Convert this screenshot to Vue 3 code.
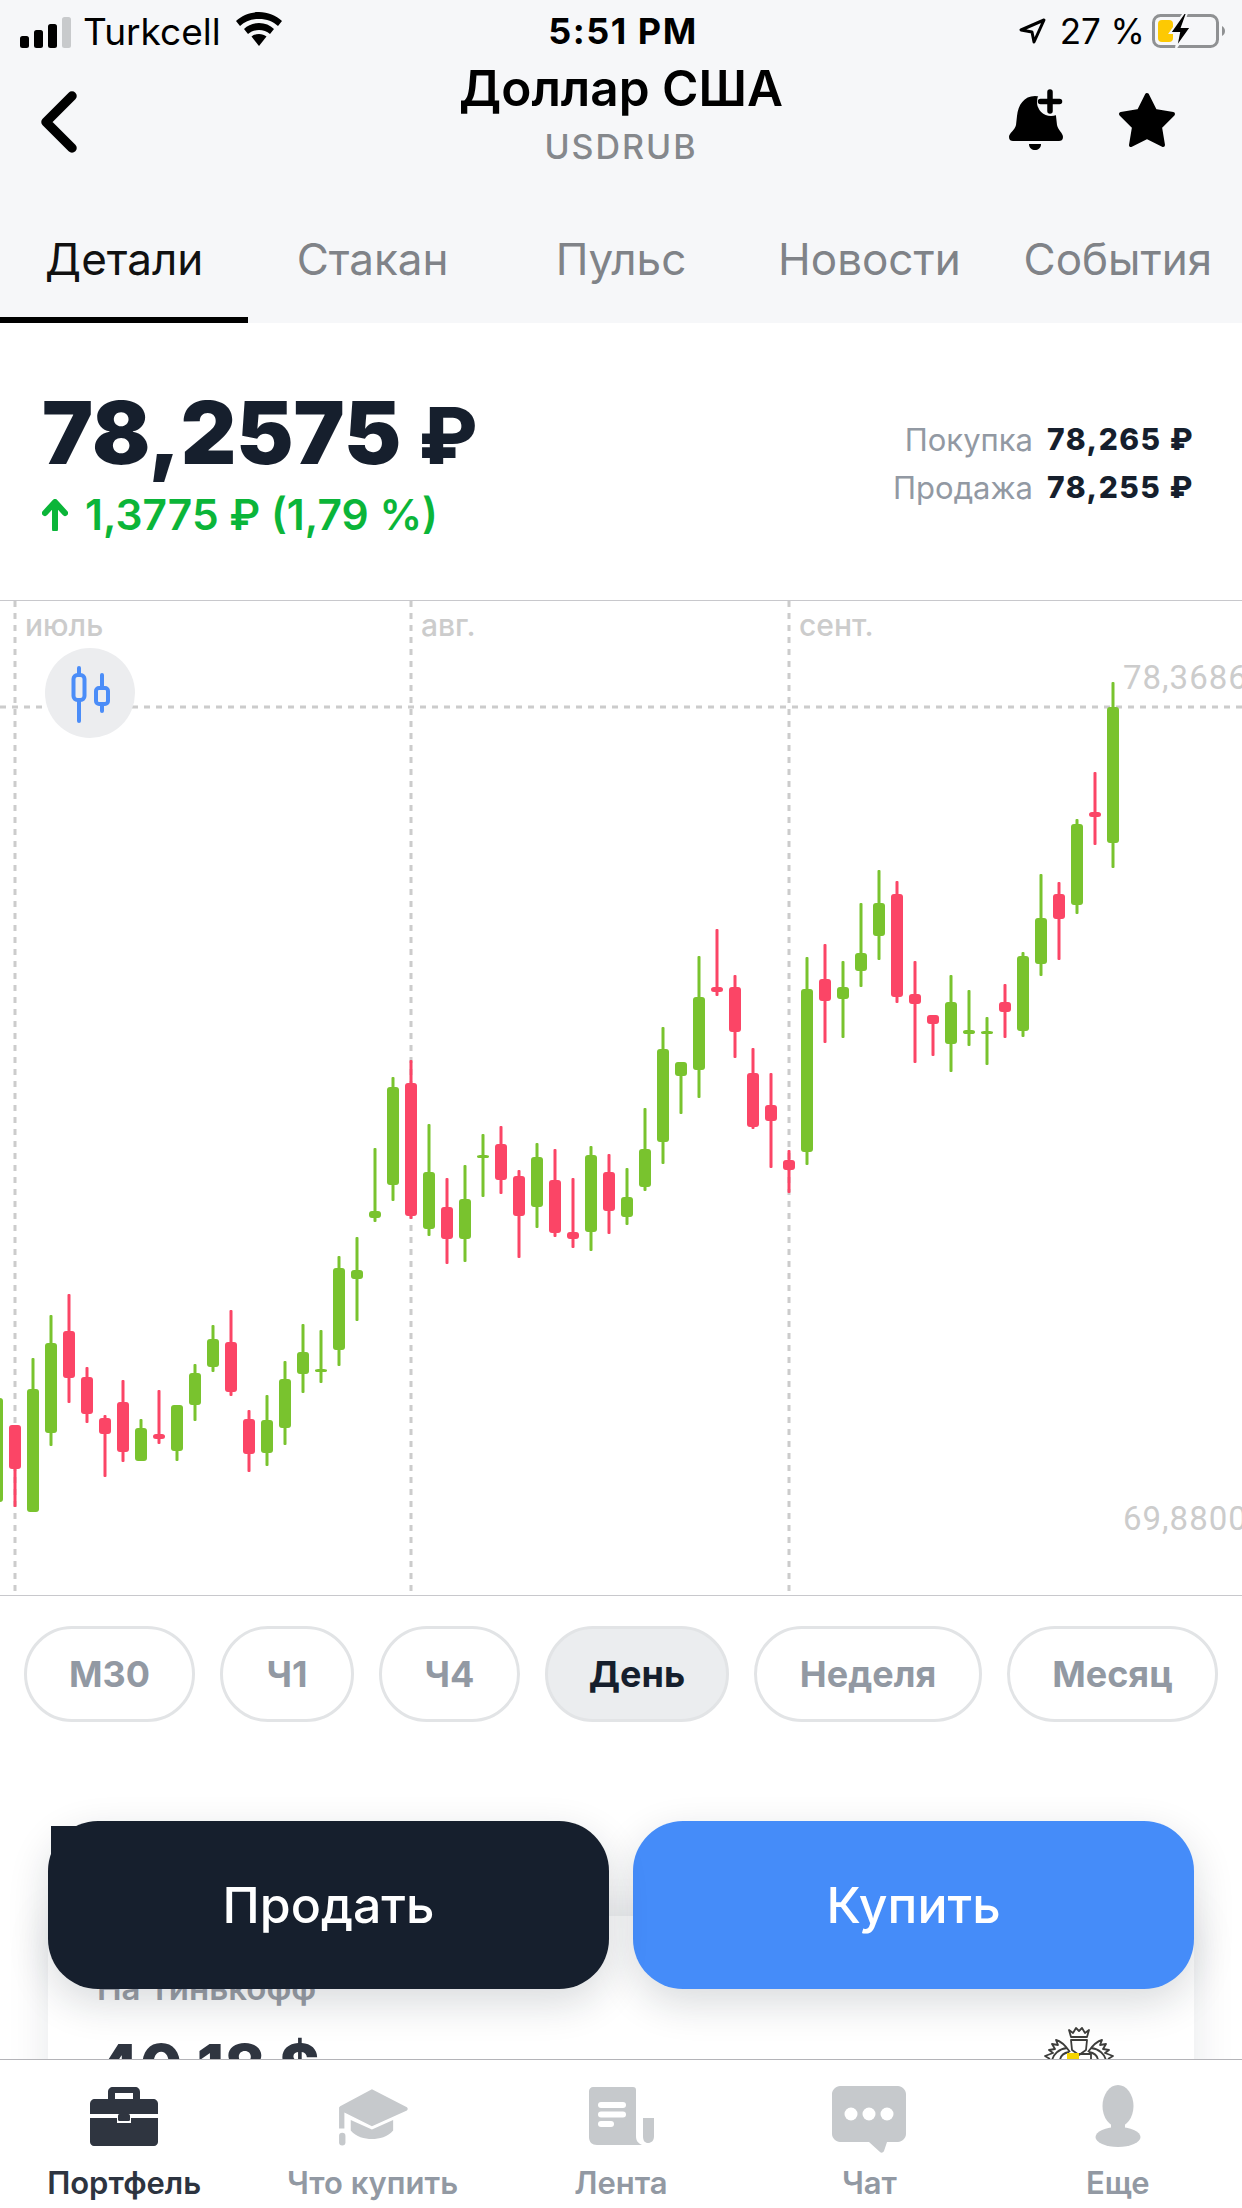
<script setup>
// [color, wick top, body top, body bottom, wick bottom] in page pixels, one candle every 18px
const raw = [
  ['g', 1398, 1398, 1502, 1502], ['r', 1425, 1425, 1469, 1507], ['g', 1358, 1389, 1512, 1512],
  ['g', 1315, 1343, 1433, 1446], ['r', 1294, 1331, 1378, 1403], ['r', 1367, 1377, 1414, 1423],
  ['r', 1415, 1418, 1434, 1477], ['r', 1380, 1402, 1452, 1462], ['g', 1419, 1428, 1461, 1461],
  ['r', 1390, 1434, 1439, 1444], ['g', 1405, 1405, 1451, 1461], ['g', 1364, 1373, 1405, 1421],
  ['g', 1325, 1339, 1367, 1372], ['r', 1310, 1342, 1392, 1396], ['r', 1410, 1419, 1454, 1472],
  ['g', 1395, 1420, 1453, 1466], ['g', 1361, 1379, 1428, 1445], ['g', 1324, 1352, 1374, 1393],
  ['g', 1330, 1369, 1372, 1383], ['g', 1256, 1268, 1350, 1366], ['g', 1237, 1270, 1279, 1321],
  ['g', 1148, 1211, 1218, 1222], ['g', 1077, 1087, 1185, 1201], ['r', 1060, 1083, 1216, 1219],
  ['g', 1124, 1172, 1229, 1236], ['r', 1178, 1207, 1239, 1264], ['g', 1165, 1199, 1239, 1262],
  ['g', 1134, 1155, 1158, 1197], ['r', 1126, 1144, 1180, 1194], ['r', 1170, 1176, 1216, 1258],
  ['g', 1143, 1157, 1207, 1228], ['r', 1149, 1180, 1233, 1237], ['r', 1178, 1232, 1239, 1248],
  ['g', 1146, 1155, 1232, 1251], ['r', 1154, 1172, 1211, 1234], ['g', 1168, 1197, 1217, 1225],
  ['g', 1108, 1149, 1187, 1191], ['g', 1027, 1049, 1142, 1164], ['g', 1062, 1062, 1076, 1114],
  ['g', 956, 997, 1070, 1098], ['r', 929, 987, 992, 996], ['r', 975, 987, 1032, 1058],
  ['r', 1048, 1073, 1127, 1129], ['r', 1073, 1105, 1121, 1168], ['r', 1150, 1160, 1170, 1193],
  ['g', 957, 989, 1152, 1165], ['r', 944, 979, 1001, 1043], ['g', 961, 987, 999, 1038],
  ['g', 903, 953, 971, 987], ['g', 870, 903, 936, 960], ['r', 881, 894, 997, 1003],
  ['r', 961, 994, 1004, 1063], ['r', 1015, 1015, 1024, 1056], ['g', 975, 1002, 1044, 1072],
  ['g', 990, 1030, 1034, 1046], ['g', 1017, 1031, 1034, 1065], ['r', 984, 1002, 1012, 1038],
  ['g', 952, 956, 1031, 1037], ['g', 874, 918, 964, 976], ['r', 882, 894, 919, 960],
  ['g', 819, 824, 905, 914], ['r', 772, 812, 817, 845], ['g', 682, 707, 843, 868],
];

const candles = raw.map((c, i) => ({
  x: -3 + 18 * i,
  color: c[0] === 'g' ? '#79c32e' : '#fb4566',
  wickTop: c[1],
  bodyTop: c[2],
  bodyH: c[3] - c[2],
  wickH: c[4] - c[1],
}));

const months = [
  { x: 15, label: 'июль' },
  { x: 411, label: 'авг.' },
  { x: 789, label: 'сент.' },
];

const tabs = ['Детали', 'Стакан', 'Пульс', 'Новости', 'События'];

const periods = [
  { label: 'М30', w: 171 },
  { label: 'Ч1', w: 134 },
  { label: 'Ч4', w: 141 },
  { label: 'День', w: 184, active: true },
  { label: 'Неделя', w: 228 },
  { label: 'Месяц', w: 211 },
];
</script>

<template>
  <div class="screen">
    <header class="top">
      <div class="status">
        <div class="status-left">
          <div class="signal">
            <i class="b1"></i><i class="b2"></i><i class="b3"></i><i class="b4"></i>
          </div>
          <span class="carrier">Turkcell</span>
          <svg class="wifi" width="46" height="34" viewBox="0 0 46 34">
            <path d="M23 0C14 0 6 3.500 0 9l4 5c5-4.500 11-7 19-7s14 2.500 19 7l4-5C40 3.500 32 0 23 0z" />
            <path d="M23 11c-6 0-11 2-15 6l4 5c3-2.500 7-4 11-4s8 1.500 11 4l4-5c-4-4-9-6-15-6z" />
            <path d="M23 22c-3 0-5.500 1-7.500 2.500L23 34l7.500-9.500C28.500 23 26 22 23 22z" />
          </svg>
        </div>
        <span class="time">5:51 PM</span>
        <div class="status-right">
          <svg class="loc" width="27" height="26" viewBox="0 0 27 26">
            <path d="M25 2L2 12l11 2 2 10z" fill="none" stroke="#000" stroke-width="3" stroke-linejoin="round" />
          </svg>
          <span class="percent">27 %</span>
          <svg class="battery" width="74" height="34" viewBox="0 0 74 34">
            <rect x="1.500" y="1.500" width="64" height="31" rx="7" fill="none" stroke="#8f9193" stroke-width="3" />
            <rect x="6" y="6" width="15" height="22" rx="4" fill="#fdc903" />
            <path d="M70 12c2 1 3 3 3 5s-1 4-3 5z" fill="#8f9193" />
            <path d="M32 -1l-14 20h9l-3 15 15-21h-9l5-14z" fill="#000" stroke="#f6f7f9" stroke-width="2" />
          </svg>
        </div>
      </div>

      <div class="nav">
        <svg class="back" width="40" height="64" viewBox="0 0 40 64">
          <path d="M32 6L6 32l26 26" fill="none" stroke="#000" stroke-width="9.500" stroke-linecap="round" stroke-linejoin="round" />
        </svg>
        <div class="heading">
          <div class="title">Доллар США</div>
          <div class="ticker">USDRUB</div>
        </div>
        <div class="actions">
          <svg width="64" height="64" viewBox="1005 90 64 64">
            <path d="M1035 98c-11 0-17 9-18 20l-1 9c-1 5-7 8-7 12 0 3 2 4 4 4h46c2 0 4-1 4-4 0-4-5-7-6-12l-1-9c-1-11-9-20-21-20z" fill="#000" />
            <circle cx="1051" cy="104" r="14" fill="#f6f7f9" />
            <path d="M1050 94v19M1040.500 103.500h19" stroke="#000" stroke-width="5.500" stroke-linecap="round" />
            <path d="M1029 146h12c0 4-3 6-6 6s-6-2-6-6z" fill="#000" />
          </svg>
          <svg width="58" height="56" viewBox="0 0 58 56">
            <path d="M29 3l8 16 18 3-13 13 3 18-16-8-16 8 3-18L3 22l18-3z" fill="#000" stroke="#000" stroke-width="4" stroke-linejoin="round" />
          </svg>
        </div>
      </div>

      <nav class="tabs">
        <div v-for="(t, i) in tabs" :key="t" class="tab" :class="{ active: i === 0 }">{{ t }}</div>
      </nav>
    </header>

    <section class="price">
      <div>
        <div class="price-main">78,2575 <span class="rub">₽</span></div>
        <div class="change">
          <svg width="26" height="32" viewBox="0 0 26 32">
            <path d="M13 30V4M3 14L13 3l10 11" fill="none" stroke="#0bb539" stroke-width="6" stroke-linecap="round" stroke-linejoin="round" />
          </svg>
          <span>1,3775 ₽ (1,79 %)</span>
        </div>
      </div>
      <div class="quotes">
        <span class="q-label">Покупка</span><span class="q-value">78,265 ₽</span>
        <span class="q-label">Продажа</span><span class="q-value">78,255 ₽</span>
      </div>
    </section>

    <div class="chart">
      <svg width="1242" height="994" viewBox="0 601 1242 994">
        <line x1="0" y1="707" x2="1242" y2="707" class="grid" />
        <g v-for="m in months" :key="m.label">
          <line :x1="m.x" y1="601" :x2="m.x" y2="1595" class="grid" />
          <text :x="m.x + 10" y="636" class="month">{{ m.label }}</text>
        </g>
        <text x="1123" y="689" class="axis">78,3686</text>
        <text x="1123" y="1530" class="axis">69,8800</text>

        <circle cx="90" cy="693" r="45" fill="#ecedef" />
        <g fill="none" stroke="#4b8df8" stroke-width="4" stroke-linecap="round">
          <path d="M79 668v7M79 700v21M102 675v13M102 704v7" />
          <rect x="73.500" y="675" width="11" height="25" rx="4" />
          <rect x="96" y="688" width="12" height="16" rx="3" />
        </g>

        <g v-for="c in candles" :key="c.x">
          <rect :x="c.x - 1.500" :y="c.wickTop" width="3" :height="c.wickH" :fill="c.color" rx="1" />
          <rect :x="c.x - 6" :y="c.bodyTop" width="12" :height="c.bodyH" :fill="c.color" rx="3" />
        </g>
      </svg>
    </div>

    <div class="periods">
      <div
        v-for="p in periods"
        :key="p.label"
        class="pill"
        :class="{ active: p.active }"
        :style="{ width: p.w + 'px' }"
      >{{ p.label }}</div>
    </div>

    <div class="lower">
      <div class="card">
        <div>
          <div class="card-label">На Тинькофф</div>
          <div class="card-value">40,18 $</div>
        </div>
        <svg class="crest" width="72" height="34" viewBox="0 0 72 34">
          <g fill="none" stroke="#3d3d3b" stroke-width="1.800" stroke-linejoin="round">
            <path d="M28 10l-2-7 4 3 3-5 3 3 3-3 3 5 4-3-2 7z" />
            <path d="M28 13h16l-1 10-7 5-7-5z" />
            <path d="M27 25c-5-7-9-11-14-12l2 5-6-1 3 5-6 1 4 3-8 3 5 3" />
            <path d="M45 25c5-7 9-11 14-12l-2 5 6-1-3 5 6 1-4 3 8 3-5 3" />
            <path d="M9 34c1-7 7-12 15-13M17 34c0-5 4-8 9-9M63 34c-1-7-7-12-15-13M55 34c0-5-4-8-9-9" />
            <path d="M36 27h12v7" />
          </g>
          <rect x="24" y="26" width="12" height="8" fill="#f5d400" />
        </svg>
      </div>
      <div class="deal">
        <button class="btn sell">Продать</button>
        <button class="btn buy">Купить</button>
      </div>
    </div>

    <footer class="bar">
      <div class="bar-item active">
        <svg width="70" height="62" viewBox="0 0 70 62">
          <path d="M19 14V7c0-3 2-5 5-5h22c3 0 5 2 5 5v7h-7V8H26v6z" fill="#2f3540" />
          <path d="M1 19c0-3 2-5 5-5h58c3 0 5 2 5 5v10H1z" fill="#2f3540" />
          <path d="M1 33h27v5h14v-5h27v24c0 2-2 4-4 4H5c-2 0-4-2-4-4z" fill="#2f3540" />
          <rect x="29" y="29" width="12" height="7" rx="1.500" fill="#2f3540" />
        </svg>
        <span>Портфель</span>
      </div>
      <div class="bar-item">
        <svg width="70" height="62" viewBox="2 -2 66 58.500">
          <path d="M34 2l33 17c1 1 1 2 0 3L34 37 8 24v15H3V20c0-1 0-1 1-2z" fill="#c6c9cc" />
          <path d="M14 31l20 9 20-9v10c-5 6-13 8-20 8s-15-2-20-8z" fill="#c6c9cc" />
          <rect x="3" y="43" width="6" height="12" rx="3" fill="#c6c9cc" />
        </svg>
        <span>Что купить</span>
      </div>
      <div class="bar-item">
        <svg width="70" height="62" viewBox="2 0 70 62">
          <path d="M9 2h40c2 0 3 1 3 3v46c0 5 2 7 6 9H13c-5 0-8-3-8-8V6c0-2 2-4 4-4z" fill="#c6c9cc" />
          <path d="M59 33h11v18c0 5-3 7-6 7s-5-2-5-7z" fill="#c6c9cc" />
          <rect x="14" y="17" width="28" height="6" rx="3" fill="#fff" />
          <rect x="14" y="26.500" width="28" height="6" rx="3" fill="#fff" />
          <rect x="14" y="36" width="16" height="6" rx="3" fill="#fff" />
        </svg>
        <span>Лента</span>
      </div>
      <div class="bar-item">
        <svg width="76" height="68" viewBox="0 0 76 68">
          <path d="M9 1h58c4 0 8 4 8 8v40c0 4-4 8-8 8H56l-3 9c-1 2-3 2-4 1L38 57H9c-4 0-8-4-8-8V9c0-4 4-8 8-8z" fill="#c6c9cc" />
          <circle cx="20" cy="29" r="6.500" fill="#fff" />
          <circle cx="38" cy="29" r="6.500" fill="#fff" />
          <circle cx="56" cy="29" r="6.500" fill="#fff" />
        </svg>
        <span>Чат</span>
      </div>
      <div class="bar-item">
        <svg width="70" height="62" viewBox="0 0 70 62">
          <ellipse cx="35" cy="21" rx="15.500" ry="21" fill="#c6c9cc" />
          <rect x="28" y="30" width="14" height="16" fill="#c6c9cc" />
          <ellipse cx="35" cy="52" rx="22.500" ry="10" fill="#c6c9cc" />
        </svg>
        <span>Еще</span>
      </div>
    </footer>
  </div>
</template>

<style scoped>
.screen {
  width: 1242px;
  height: 2208px;
  display: flex;
  flex-direction: column;
  overflow: hidden;
  background: #fff;
  font-family: Inter, "Liberation Sans", sans-serif;
  color: #161f2d;
}

.top {
  height: 323px;
  flex-shrink: 0;
  background: #f6f7f9;
  display: flex;
  flex-direction: column;
}

.status {
  height: 60px;
  box-sizing: border-box;
  padding: 2px 16px 0 20px;
  display: grid;
  grid-template-columns: 1fr auto 1fr;
  align-items: center;
  color: #000;
}

.status-left,
.status-right {
  display: flex;
  align-items: center;
}

.status-right {
  justify-content: flex-end;
}

.signal {
  display: flex;
  align-items: flex-end;
  gap: 5px;
  height: 31px;
  margin-top: 2px;
}

.signal i {
  width: 9px;
  border-radius: 2.500px;
  background: #000;
}

.signal .b1 { height: 12px; }
.signal .b2 { height: 18px; }
.signal .b3 { height: 24px; }
.signal .b4 { height: 31px; background: #c8cacc; }

.carrier {
  font-size: 37px;
  margin-left: 12px;
}

.wifi {
  margin-left: 15px;
  margin-top: -4px;
}

.time {
  font-weight: 700;
  font-size: 36px;
  letter-spacing: 1.500px;
}

.percent {
  font-size: 35px;
  margin-left: 14px;
}

.battery {
  margin-left: 7px;
}

.nav {
  height: 112px;
  display: grid;
  grid-template-columns: 1fr auto 1fr;
  padding: 0 66px;
  align-items: center;
}

.back {
  margin-top: 12px;
  margin-left: -26px;
}

.heading {
  text-align: center;
  margin-top: -6px;
}

.title {
  font-size: 49.500px;
  font-weight: 600;
  line-height: 58px;
  color: #000;
}

.ticker {
  font-size: 34px;
  font-weight: 500;
  line-height: 40px;
  letter-spacing: 2px;
  margin-top: 10px;
  color: #85888c;
}

.actions {
  display: flex;
  justify-content: flex-end;
  align-items: center;
  gap: 49px;
  margin-top: 8px;
}

.tabs {
  display: grid;
  grid-template-columns: repeat(5, 1fr);
  flex: 1;
}

.tab {
  font-size: 44px;
  color: #808388;
  display: flex;
  align-items: center;
  justify-content: center;
  padding-top: 30px;
  padding-bottom: 2px;
  border-bottom: 6px solid transparent;
}

.tab.active {
  color: #111;
  border-bottom-color: #000;
}

.price {
  height: 278px;
  flex-shrink: 0;
  box-sizing: border-box;
  padding: 60px 48px 0 42px;
  display: flex;
  justify-content: space-between;
  border-bottom: 1px solid #c8c8cc;
}

.price-main {
  font-size: 86px;
  font-weight: 900;
  line-height: 100px;
  white-space: nowrap;
}

.rub {
  font-size: 78px;
  font-weight: 800;
}

.change {
  display: flex;
  align-items: center;
  gap: 17px;
  margin-top: 4px;
  font-size: 42.500px;
  font-weight: 600;
  line-height: 50px;
  color: #0bb539;
}

.quotes {
  display: grid;
  grid-template-columns: auto auto;
  column-gap: 14px;
  row-gap: 13px;
  align-self: flex-start;
  margin-top: 39px;
  font-size: 30px;
  line-height: 35px;
}

.q-label {
  text-align: right;
  font-size: 31px;
  color: #9299a3;
}

.q-value {
  font-weight: 800;
  letter-spacing: 1.500px;
}

.chart {
  height: 994px;
  flex-shrink: 0;
  border-bottom: 1px solid #c8c8cc;
}

.chart svg {
  display: block;
}

.grid {
  stroke: #ccc;
  stroke-width: 3;
  stroke-dasharray: 6 6;
}

.month {
  font-size: 30px;
  font-weight: 500;
  fill: #ccc;
}

.axis {
  font-family: Roboto, sans-serif;
  font-size: 33px;
  letter-spacing: 1px;
  fill: #ccc;
}

.periods {
  display: flex;
  gap: 25px;
  padding: 30px 0 0 24px;
  flex-shrink: 0;
}

.pill {
  height: 96px;
  box-sizing: border-box;
  border: 3px solid #e2e4e6;
  border-radius: 48px;
  display: flex;
  align-items: center;
  justify-content: center;
  font-size: 36px;
  font-weight: 700;
  color: #9299a3;
}

.pill.active {
  background: #ebedef;
  color: #161f2d;
}

.lower {
  position: relative;
  flex: 1;
  overflow: hidden;
  padding: 194px 48px 0;
}

.card {
  height: 200px;
  box-sizing: border-box;
  padding: 52px 79px 0 49px;
  display: flex;
  justify-content: space-between;
  background: #fff;
  box-shadow: 0 0 40px rgba(20, 30, 45, 0.1);
}

.card-label {
  font-size: 33px;
  font-weight: 600;
  line-height: 40px;
  color: #9a9ea6;
}

.card-value {
  font-size: 62px;
  font-weight: 800;
  line-height: 70px;
  margin-top: 24px;
  color: #2f3540;
}

.crest {
  margin-top: 59px;
}

.deal {
  position: absolute;
  left: 48px;
  right: 48px;
  top: 99px;
  display: grid;
  grid-template-columns: 561px 561px;
  gap: 24px;
}

.btn {
  height: 168px;
  border: none;
  border-radius: 50px;
  font-family: Inter, sans-serif;
  font-size: 50px;
  font-weight: 500;
  color: #fff;
  box-shadow: 0 14px 40px rgba(20, 30, 45, 0.16);
}

.sell {
  position: relative;
  background: #161f2d;
}

.sell::before {
  content: '';
  position: absolute;
  left: 3px;
  top: 5px;
  width: 30px;
  height: 30px;
  background: #161f2d;
}

.buy {
  background: #458cf9;
}

.bar {
  height: 149px;
  flex-shrink: 0;
  box-sizing: border-box;
  position: relative;
  background: #fff;
  border-top: 1px solid #b4b4b8;
  display: grid;
  grid-template-columns: repeat(5, 1fr);
}

.bar-item {
  display: flex;
  flex-direction: column;
  align-items: center;
  padding-top: 25px;
  font-size: 31px;
  font-weight: 600;
  color: #9299a3;
}

.bar-item svg {
  flex-shrink: 0;
}

.bar-item span {
  position: absolute;
  bottom: 8px;
  line-height: 34px;
}

.bar-item.active {
  color: #2d3440;
}
</style>
